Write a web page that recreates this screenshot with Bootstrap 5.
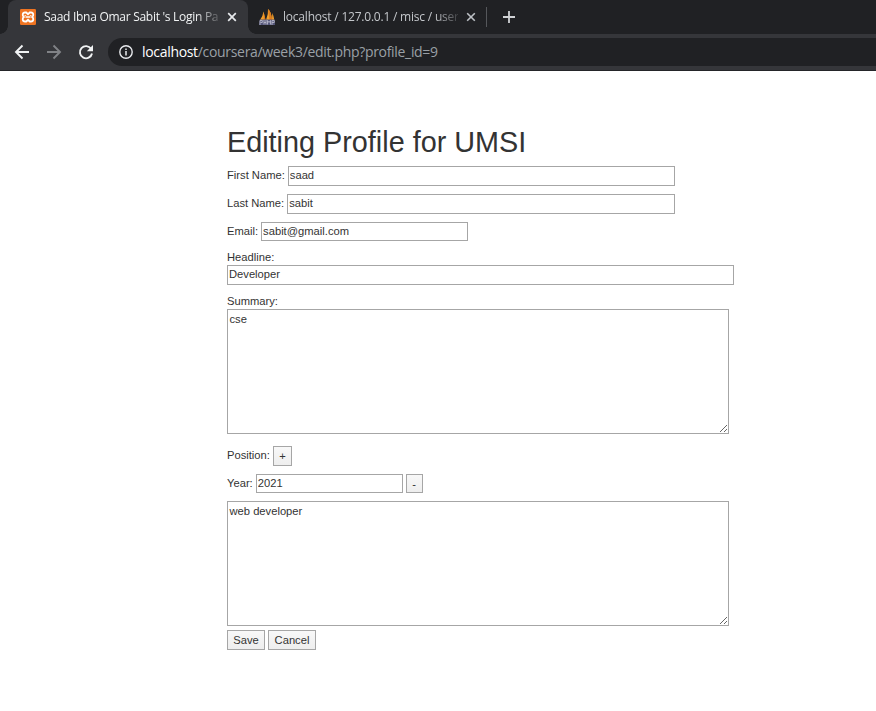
<!DOCTYPE html>
<html lang="en">
<head>
<meta charset="utf-8">
<title>Saad Ibna Omar Sabit 's Login Page</title>
<link rel="stylesheet" href="https://cdn.jsdelivr.net/npm/bootstrap@5.3.0/dist/css/bootstrap.min.css">
<style>
body{font:11.2px/16px "Liberation Sans",Arial,sans-serif;color:#333;background:#fff;width:876px;height:711px;overflow:hidden}
.chrome{font-family:"Open Sans","Noto Sans",sans-serif}
.strip{height:34px;background:#202124;padding-left:8px}
.tab{height:34px;font-size:12px;line-height:34px;padding-left:12px}
.tab-on{width:240px;background:#35363a;color:#f1f3f4;border-radius:8px 8px 0 0;position:relative}
.tab-on::before,.tab-on::after{content:"";position:absolute;bottom:0;width:8px;height:8px}
.tab-on::before{left:-8px;background:radial-gradient(circle at 0 0,#202124 7.5px,#35363a 8px)}
.tab-on::after{right:-8px;background:radial-gradient(circle at 100% 0,#202124 7.5px,#35363a 8px)}
.tab-off{width:238px;padding-left:11px;color:#c4c7cb}
.tab-title{width:175px;margin-left:8px;letter-spacing:-.28px;-webkit-mask-image:linear-gradient(90deg,#000 152px,transparent 180px);mask-image:linear-gradient(90deg,#000 152px,transparent 180px)}
.tab-title.t2{letter-spacing:-.21px}
.x-ic{margin-left:8px}
.sep{width:1px;height:20px;background:#55575b}
.bar{height:37px;background:#35363a;border-bottom:1px solid #242529}
.omni{height:28px;border-radius:14px 0 0 14px;background:#202124;color:#9aa0a6;font-size:14px;line-height:28px;padding-left:11px;margin-left:14px}
.url{letter-spacing:-.32px;margin-left:9px}
.url span{color:#fff}
.sheet{width:508px;margin-left:227px;padding-top:55px}
.sheet h1{font-size:28.8px;line-height:32px;font-weight:400;margin:0 0 8px}
.line{height:20px;margin-bottom:8px;gap:3px}
.line.tight{margin-bottom:7px}
.pos-line{margin-top:12px}
.line label{line-height:18px}
.cap{line-height:16px}
.box{border:1px solid #a6a6a6;border-radius:0;background:#fff;color:#333;font:inherit;padding:0 1px 2px;outline:0;height:20px;display:block}
.line .box,.line .key{flex:none}
.line .box{line-height:14px}
.w-name1{width:387px}.w-name2{width:388px}
.w-mail{width:207px}.w-year{width:147px}
.line .h19{height:19px}
.w-head{width:507px}
textarea.box{width:502px;height:125px;padding:1px 2px 2px 1.5px;line-height:16px;resize:both}
.key{border:1px solid #a6a6a6;border-radius:0;background:linear-gradient(#f8f8f8,#eee);color:#333;font:inherit;line-height:16px;padding:0;height:20px;text-align:center}
.k-plus{width:19px}.k-minus{width:17px}.k-save{width:38px}.k-cancel{width:48px}
</style>
</head>
<body>
<header class="chrome">
  <div class="strip d-flex align-items-center">
    <div class="tab tab-on d-flex align-items-center">
      <svg width="16" height="16" viewBox="0 0 16 16"><rect width="16" height="16" rx="1.2" fill="#ee7422"/><path d="M5 3.500h1.200L8 5.200l1.800-1.700H11c2.800 0 2.800 3.400 1.200 4.500 1.600 1.100 1.600 4.500-1.200 4.500H9.800L8 10.800l-1.800 1.700H5C2.200 12.500 2.200 9.100 3.800 8 2.200 6.900 2.200 3.500 5 3.500Z" fill="none" stroke="#fff" stroke-width="1.800"/><path d="M5.500 8h5M5.300 6v.8M10.700 6v.8" stroke="#fff" stroke-width="1.700"/></svg>
      <div class="tab-title text-nowrap">Saad Ibna Omar Sabit 's Login Pa</div>
      <svg class="x-ic" width="10" height="10" viewBox="0 0 10 10"><path d="M1.200 1.200l7.600 7.600M8.800 1.200L1.200 8.800" stroke="#e8eaed" stroke-width="1.700"/></svg>
    </div>
    <div class="tab tab-off d-flex align-items-center">
      <svg width="16" height="16" viewBox="0 0 16 16"><path d="M1 11Q4 7 4.500 2.500L6.500 11ZM7 11Q9.500 5 9 0q3.500 3 4 11ZM13 11l.3-7q1.500 3 2 7Z" fill="#f3a02c"/><path d="M4.500 2.500l2 8.500H4.800ZM9 0q3.500 3 4 11H10.500Z" fill="#dd7c1c"/><path d="M.8 10.500H15.500L16 16H0Z" fill="#55577a"/><path d="M1 16v-4.500h2.300v2H1.500M5 11v4.500M5 13.500h2M7 11v4.500M8.500 15.500v-4l1.500 2 1.500-2v4M13 16v-4.500h2.300v2H13" fill="none" stroke="#b7b7c8" stroke-width=".9"/></svg>
      <div class="tab-title t2 text-nowrap">localhost / 127.0.0.1 / misc / user</div>
      <svg class="x-ic" width="10" height="10" viewBox="0 0 10 10"><path d="M1.200 1.200l7.600 7.600M8.800 1.200L1.200 8.800" stroke="#bdc1c6" stroke-width="1.600"/></svg>
    </div>
    <div class="sep"></div>
    <svg class="ms-3" width="12" height="12" viewBox="0 0 12 12"><path d="M6 0v12M0 6h12" stroke="#d0d2d5" stroke-width="1.800"/></svg>
  </div>
  <div class="bar d-flex align-items-center">
    <svg width="94" height="28" viewBox="0 0 94 28" fill="none" stroke-width="1.900"><path d="M29 14H16.500M22.500 7.500L16 14l6.500 6.500" stroke="#f1f3f4"/><path d="M47 14h12.500M53.500 7.500L60 14l-6.500 6.500" stroke="#808286"/><path d="M91.100 10.800A6.100 6.100 0 1 0 92 15.500" stroke="#f1f3f4"/><path d="M93 7v6.200h-6.200Z" fill="#f1f3f4"/></svg>
    <div class="omni flex-fill d-flex align-items-center">
      <svg width="14" height="14" viewBox="0 0 14 14"><circle cx="7" cy="7" r="6.200" fill="none" stroke="#e8eaed" stroke-width="1.400"/><path d="M7 6v4.500M7 3.400v1.500" stroke="#e8eaed" stroke-width="1.500"/></svg>
      <div class="url text-nowrap"><span>localhost</span>/coursera/week3/edit.php?profile_id=9</div>
    </div>
  </div>
</header>
<main class="sheet">
  <h1 class="text-nowrap">Editing Profile for UMSI</h1>
  <form>
    <div class="line d-flex"><label for="fn">First Name:</label><input id="fn" class="box w-name1" value="saad"></div>
    <div class="line d-flex"><label for="ln">Last Name:</label><input id="ln" class="box w-name2" value="sabit"></div>
    <div class="line tight d-flex"><label for="em">Email:</label><input id="em" class="box w-mail h19" value="sabit@gmail.com"></div>
    <div class="mb-2"><label class="cap d-block" for="hd">Headline:</label><input id="hd" class="box w-head" value="Developer"></div>
    <div><label class="cap d-block" for="sm">Summary:</label><textarea id="sm" class="box">cse</textarea></div>
    <div class="line d-flex pos-line"><label>Position:</label><button type="button" class="key k-plus">+</button></div>
    <div class="line tight d-flex"><label for="yr">Year:</label><input id="yr" class="box w-year h19" value="2021"><button type="button" class="key k-minus h19">-</button></div>
    <textarea class="box">web developer</textarea>
    <div class="line d-flex mt-1"><button type="button" class="key k-save">Save</button><button type="button" class="key k-cancel">Cancel</button></div>
  </form>
</main>
<script src="https://cdn.jsdelivr.net/npm/bootstrap@5.3.0/dist/js/bootstrap.bundle.min.js"></script>
</body>
</html>
